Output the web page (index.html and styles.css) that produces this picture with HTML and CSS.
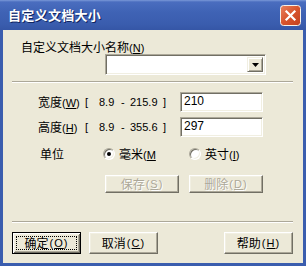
FILE: index.html
```html
<!DOCTYPE html>
<html lang="zh-CN">
<head>
<meta charset="utf-8">
<title>自定义文档大小</title>
<link rel="stylesheet" href="styles.css">
</head>
<body>
<div class="window">
  <div class="titlebar">
    <span class="title">自定义文档大小</span>
    <span class="close">
      <svg width="21" height="21" viewBox="0 0 21 21">
        <defs>
          <linearGradient id="cg" x1="0" y1="0" x2="1" y2="1">
            <stop offset="0" stop-color="#E9825F"/>
            <stop offset="0.5" stop-color="#D7542D"/>
            <stop offset="1" stop-color="#C2401E"/>
          </linearGradient>
        </defs>
        <rect x="0.5" y="0.5" width="20" height="20" rx="3" fill="url(#cg)" stroke="#F4F1EA"/>
        <path d="M6.5 6.5 L14.5 14.5 M14.5 6.5 L6.5 14.5" stroke="#fff" stroke-width="2.2" stroke-linecap="square"/>
      </svg>
    </span>
  </div>
  <div class="client">
    <div class="name-label">自定义文档大小名称<span class="lat">(<u>N</u>)</span></div>
    <div class="combo">
      <div class="combo-field"></div>
      <div class="combo-btn">
        <svg width="7" height="4" viewBox="0 0 7 4"><path d="M0 0 H7 L3.5 4 Z" fill="#000"/></svg>
      </div>
    </div>
    <div class="sep"></div>
    <div class="size-row first">
      <span class="lbl">宽度<span class="lat">(<u>W</u>)</span></span>
      <span class="num">[</span>
      <span class="num">8.9</span>
      <span class="num">-</span>
      <span class="num">215.9</span>
      <span class="num">]</span>
      <span class="field">210</span>
    </div>
    <div class="size-row">
      <span class="lbl">高度<span class="lat">(<u>H</u>)</span></span>
      <span class="num">[</span>
      <span class="num">8.9</span>
      <span class="num">-</span>
      <span class="num">355.6</span>
      <span class="num">]</span>
      <span class="field">297</span>
    </div>
    <div class="unit-row">
      <span class="unit-lbl">单位</span>
      <span class="opt opt-mm"><span class="radio checked"></span><span>毫米<span class="lat">(<u>M</u></span></span></span>
      <span class="opt"><span class="radio"></span><span>英寸<span class="lat">(<u>I</u>)</span></span></span>
    </div>
    <div class="action-row">
      <span class="btn disabled">保存<span class="lat">(<u>S</u>)</span></span>
      <span class="btn disabled">删除<span class="lat">(<u>D</u>)</span></span>
    </div>
    <div class="sep sep2"></div>
    <div class="footer">
      <span class="btn default"><span class="focus">确定<span class="lat">(<u>O</u>)</span></span></span>
      <span class="btn">取消<span class="lat">(<u>C</u>)</span></span>
      <span class="spacer"></span>
      <span class="btn">帮助<span class="lat">(<u>H</u>)</span></span>
    </div>
  </div>
</div>
</body>
</html>
```

FILE: styles.css
```css
* { box-sizing: border-box; }
html, body { margin: 0; padding: 0; background: #fff; }
body {
  font-family: "Noto Sans CJK SC", "Liberation Sans", sans-serif;
  font-size: 12px;
  color: #000;
}
.lat { font-family: "Liberation Sans", sans-serif; font-size: 11px; }
u { text-decoration: underline; text-underline-offset: 1px; }

.window {
  width: 306px;
  height: 266px;
  display: flex;
  flex-direction: column;
  background: #3A5DAE;
  padding: 0 3px 3px 3px;
}
.titlebar {
  height: 30px;
  margin: 0 -3px;
  display: flex;
  align-items: center;
  justify-content: space-between;
  padding: 0 5px 0 8px;
  background: linear-gradient(#7A98D8 0, #4A6DBF 2px, #3F63B5 12px, #3A5DAE 24px, #3556A6 30px);
}
.title {
  color: #fff;
  font-weight: bold;
  font-size: 13px;
  line-height: 16px;
  letter-spacing: 0.3px;
  text-shadow: 1px 1px #0F2561;
}
.close { display: flex; width: 21px; height: 21px; }

.client {
  flex: 1;
  background: #ECE9D8;
  padding: 0 10px 0 9px;
  display: flex;
  flex-direction: column;
}
.name-label {
  margin: 10px 0 0 9px;
  line-height: 14px;
  height: 14px;
}
.combo {
  margin-left: 93px;
  width: 161px;
  height: 21px;
  display: flex;
  background: #fff;
  border: 1px solid;
  border-color: #ACA899 #fff #fff #ACA899;
  box-shadow: inset 1px 1px #716F64, inset -1px -1px #F1EFE2;
  padding: 2px;
}
.combo-field { flex: 1; }
.combo-btn {
  width: 16px;
  height: 15px;
  background: #ECE9D8;
  border: 1px solid;
  border-color: #F1EFE2 #716F64 #716F64 #F1EFE2;
  box-shadow: inset 1px 1px #fff, inset -1px -1px #ACA899;
  display: flex;
  align-items: center;
  justify-content: center;
}
.combo-btn svg { margin-top: 1px; }

.sep {
  margin-top: 6px;
  height: 2px;
  border-top: 1px solid #ACA899;
  border-bottom: 1px solid #fff;
}
.sep2 { margin-top: 28px; }

.size-row {
  display: grid;
  grid-template-columns: 47px 14px 22px 9px 33px 17px 83px;
  align-items: center;
  margin: 5px 0 0 26px;
  height: 20px;
}
.size-row.first { margin-top: 9px; }
.size-row .lbl { line-height: 14px; }
.num { font-family: "Liberation Sans", sans-serif; font-size: 11px; line-height: 14px; }
.field {
  height: 20px;
  background: #fff;
  border: 1px solid;
  border-color: #ACA899 #fff #fff #ACA899;
  box-shadow: inset 1px 1px #716F64, inset -1px -1px #F1EFE2;
  font-family: "Liberation Sans", sans-serif;
  font-size: 12px;
  line-height: 17px;
  padding-left: 3px;
}

.unit-row {
  display: flex;
  align-items: center;
  margin: 9px 0 0 28px;
  height: 16px;
  line-height: 14px;
}
.unit-lbl { width: 63px; }
.opt { display: flex; align-items: center; gap: 4px; }
.opt-mm { width: 86px; }
.radio {
  width: 12px;
  height: 12px;
  border-radius: 50%;
  background: #fff;
  border: 1px solid;
  border-color: #ACA899 #fff #fff #ACA899;
  box-shadow: inset 1px 1px #716F64, inset -1px -1px #F1EFE2;
  position: relative;
}
.radio.checked::after {
  content: "";
  position: absolute;
  left: 3px;
  top: 3px;
  width: 4px;
  height: 4px;
  border-radius: 50%;
  background: #000;
}

.btn {
  display: flex;
  align-items: center;
  justify-content: center;
  background: #ECE9D8;
  border: 1px solid;
  border-color: #fff #716F64 #716F64 #fff;
  box-shadow: inset -1px -1px #ACA899, inset 1px 1px #F1EFE2;
  line-height: 14px;
}
.btn .lat { letter-spacing: 1px; margin-left: 1px; }
.action-row {
  display: flex;
  gap: 10px;
  margin: 13px 0 0 93px;
  height: 18px;
}
.action-row .btn { width: 74px; }
.btn.disabled { color: #ACA899; text-shadow: 1px 1px #fff; }

.footer {
  display: flex;
  gap: 8px;
  margin-top: 9px;
  height: 22px;
}
.footer .btn { width: 69px; }
.spacer { flex: 1; }
.btn.default {
  border: 1px solid #000;
  box-shadow: inset 1px 1px #fff, inset -1px -1px #716F64, inset 2px 2px #F1EFE2, inset -2px -2px #ACA899;
  padding: 3px;
}
.focus {
  flex: 1;
  align-self: stretch;
  display: flex;
  align-items: center;
  justify-content: center;
  outline: 1px dotted #000;
  outline-offset: -1px;
}
```
